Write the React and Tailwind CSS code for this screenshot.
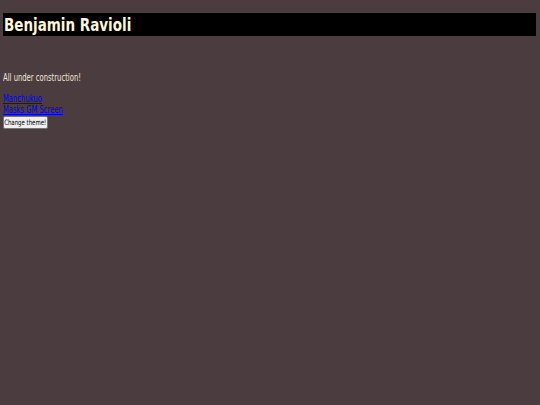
import React from 'react'

const Narrow = ({ children, className = '' }) => (
    <span className={`inline-block whitespace-nowrap origin-left ${className}`}>{children}</span>
)

const App = () => {
    return (
        <div className="min-h-[405px] bg-[#4b3d3f] px-[3px] pt-[13px] font-['DejaVu_Sans',sans-serif]">
            <h1 className="mr-[1px] h-[23px] bg-black pl-[1px] text-[18px] font-bold leading-[23px] text-[#fff6d6]">
                <Narrow className="scale-x-[0.75]">Benjamin Ravioli</Narrow>
            </h1>

            <p className="mt-[35px] text-[10.5px] leading-[12px] text-[#efe6d6]">
                <Narrow className="scale-x-[0.65]">All under construction!</Narrow>
            </p>

            <div className="mt-[10px] flex flex-col items-start text-[10px] leading-[11px]">
                <a href="#" className="text-[#0000ee]">
                    <Narrow className="scale-x-[0.68] underline">Manchukuo</Narrow>
                </a>
                <a href="#" className="text-[#0000ee]">
                    <Narrow className="scale-x-[0.68] underline">Masks GM Screen</Narrow>
                </a>
                <button className="mt-[1px] flex h-[13px] w-[45px] items-center justify-center rounded-[2px] border border-[#767676] bg-[#efefef] text-[7.5px] leading-[10px] text-black">
                    <span className="inline-block whitespace-nowrap scale-x-[0.72]">Change theme!</span>
                </button>
            </div>
        </div>
    )
}

export default App
